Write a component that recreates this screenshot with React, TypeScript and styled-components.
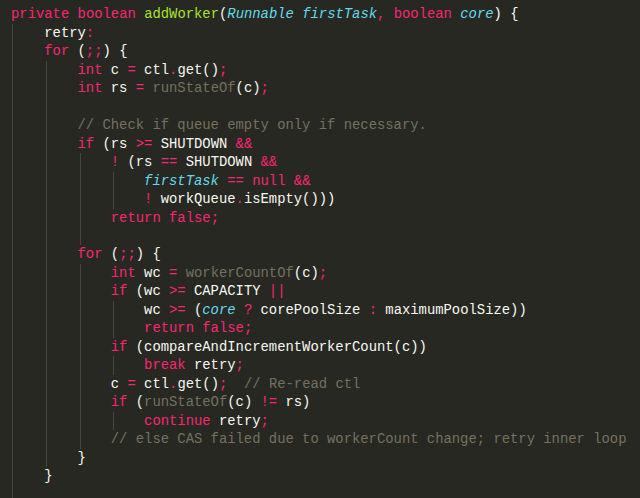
import React from "react";
import styled, { createGlobalStyle } from "styled-components";

const Global = createGlobalStyle`
  html, body {
    margin: 0;
    padding: 0;
    background: #272822;
  }
  body {
    width: 640px;
    height: 498px;
    overflow: hidden;
  }
`;

type Kind = "t" | "k" | "f" | "p" | "c" | "g";

const colors: Record<Kind, string> = {
  t: "#F8F8F2",
  k: "#F92672",
  f: "#A6E22E",
  p: "#66D9EF",
  c: "#75715E",
  g: "#75715E",
};

const Editor = styled.div`
  box-sizing: border-box;
  width: 640px;
  height: 498px;
  overflow: hidden;
  padding: 5.4px 0 0 11px;
  background: #272822;
  font-family: "Liberation Mono", "DejaVu Sans Mono", monospace;
  font-size: 13.86px;
  color: #F8F8F2;
`;

const Line = styled.div`
  display: flex;
  align-items: stretch;
  height: 18.48px;
  line-height: 18.48px;
  white-space: pre;
`;

const Guide = styled.span`
  display: inline-block;
  flex: none;
  width: 4ch;
  height: 18.48px;
  background: linear-gradient(
    to right,
    transparent 1.5px,
    #46463d 1.5px,
    #46463d 2.5px,
    transparent 2.5px
  );
`;

const Code = styled.span`
  white-space: pre;
`;

const Tok = styled.span<{ $kind: Kind }>`
  color: ${(p) => colors[p.$kind]};
  font-style: ${(p) => (p.$kind === "p" ? "italic" : "normal")};
`;

type T = [Kind, string];
type L = { indent: number; guides?: number; toks: T[] };

const k = (s: string): T => ["k", s];
const t = (s: string): T => ["t", s];
const f = (s: string): T => ["f", s];
const p = (s: string): T => ["p", s];
const c = (s: string): T => ["c", s];
const g = (s: string): T => ["g", s];

const lines: L[] = [
  { indent: 0, toks: [k("private"), t(" "), k("boolean"), t(" "), f("addWorker"), t("("), p("Runnable"), t(" "), p("firstTask"), k(","), t(" "), k("boolean"), t(" "), p("core"), t(") {")] },
  { indent: 1, toks: [t("retry"), k(":")] },
  { indent: 1, toks: [k("for"), t(" ("), k(";;"), t(") {")] },
  { indent: 2, toks: [k("int"), t(" c "), k("="), t(" ctl"), k("."), t("get()"), k(";")] },
  { indent: 2, toks: [k("int"), t(" rs "), k("="), t(" "), g("runStateOf"), t("(c)"), k(";")] },
  { indent: 2, toks: [] },
  { indent: 2, toks: [c("// Check if queue empty only if necessary.")] },
  { indent: 2, toks: [k("if"), t(" (rs "), k(">="), t(" SHUTDOWN "), k("&&")] },
  { indent: 3, toks: [k("!"), t(" (rs "), k("=="), t(" SHUTDOWN "), k("&&")] },
  { indent: 4, toks: [p("firstTask"), t(" "), k("=="), t(" "), k("null"), t(" "), k("&&")] },
  { indent: 4, toks: [k("!"), t(" workQueue"), k("."), t("isEmpty()))")] },
  { indent: 3, toks: [k("return"), t(" "), k("false"), k(";")] },
  { indent: 3, toks: [] },
  { indent: 2, toks: [k("for"), t(" ("), k(";;"), t(") {")] },
  { indent: 3, toks: [k("int"), t(" wc "), k("="), t(" "), g("workerCountOf"), t("(c)"), k(";")] },
  { indent: 3, toks: [k("if"), t(" (wc "), k(">="), t(" CAPACITY "), k("||")] },
  { indent: 4, toks: [t("wc "), k(">="), t(" ("), p("core"), t(" "), k("?"), t(" corePoolSize "), k(":"), t(" maximumPoolSize))")] },
  { indent: 4, toks: [k("return"), t(" "), k("false"), k(";")] },
  { indent: 3, toks: [k("if"), t(" (compareAndIncrementWorkerCount(c))")] },
  { indent: 4, toks: [k("break"), t(" retry"), k(";")] },
  { indent: 3, toks: [t("c "), k("="), t(" ctl"), k("."), t("get()"), k(";"), t("  "), c("// Re-read ctl")] },
  { indent: 3, toks: [k("if"), t(" ("), g("runStateOf"), t("(c) "), k("!="), t(" rs)")] },
  { indent: 4, toks: [k("continue"), t(" retry"), k(";")] },
  { indent: 3, toks: [c("// else CAS failed due to workerCount change; retry inner loop")] },
  { indent: 2, toks: [t("}")] },
  { indent: 1, toks: [t("}")] },
  { indent: 1, toks: [] },
];

export default function App() {
  return (
    <>
      <Global />
      <Editor>
        {lines.map((ln, i) => {
          const gcount = ln.guides ?? ln.indent;
          return (
            <Line key={i}>
              {Array.from({ length: gcount }).map((_, j) => (
                <Guide key={j} />
              ))}
              <Code>
                {ln.toks.map(([kind, text], j) => (
                  <Tok key={j} $kind={kind}>
                    {text}
                  </Tok>
                ))}
              </Code>
            </Line>
          );
        })}
      </Editor>
    </>
  );
}
